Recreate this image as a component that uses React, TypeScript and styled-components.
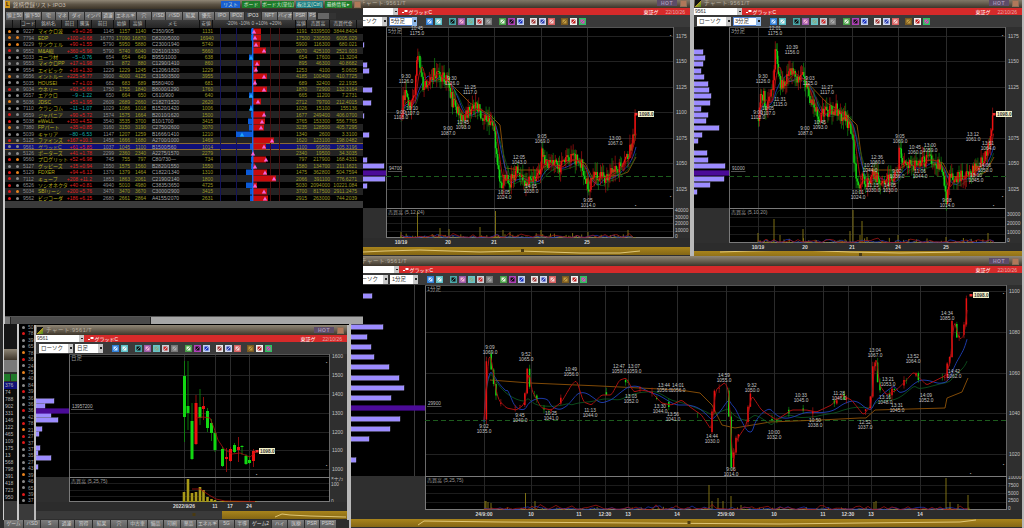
import React from "react";
import styled, { createGlobalStyle } from "styled-components";

const Global = createGlobalStyle`
  html, body { margin: 0; padding: 0; background: #000; overflow: hidden; }
`;

const FONT = `"Liberation Sans", "Noto Sans CJK JP", sans-serif`;

const Desktop = styled.div`
  position: relative;
  width: 1024px;
  height: 528px;
  overflow: hidden;
  background: #000;
  font-family: ${FONT};
  font-size: 5px;
  color: #aaa;
`;

/* ---------- random + chart maths ---------- */
type P = [number, number];

function rng(seed: number) {
  let s = seed;
  return () => {
    s = (s * 16807) % 2147483647;
    return (s % 10000) / 10000;
  };
}

function interp(a: P[], x: number) {
  for (let i = 1; i < a.length; i++) {
    if (x <= a[i][0]) {
      const [x0, y0] = a[i - 1];
      const [x1, y1] = a[i];
      return y0 + ((y1 - y0) * (x - x0)) / Math.max(x1 - x0, 0.001);
    }
  }
  return a[a.length - 1][1];
}

function candles(a: P[], seed: number, step: number, noise: number, density: number) {
  const r = rng(seed);
  let up = "", dn = "", upW = "", dnW = "";
  let prev = a[0][1];
  const end = a[a.length - 1][0];
  for (let x = a[0][0]; x <= end; x += step) {
    const base = interp(a, x);
    const close = base + (r() - 0.5) * noise;
    const hi = Math.min(prev, close) - r() * noise * 0.8;
    const lo = Math.max(prev, close) + r() * noise * 0.8;
    if (r() < density || Math.abs(close - prev) > noise * 1.6) {
      const isUp = close < prev;
      const b = `M${x.toFixed(1)} ${prev.toFixed(1)}V${close.toFixed(1)}`;
      const w = `M${x.toFixed(1)} ${hi.toFixed(1)}V${lo.toFixed(1)}`;
      if (isUp) { up += b; upW += w; } else { dn += b; dnW += w; }
    }
    prev = close;
  }
  return { up, dn, upW, dnW };
}

function ma(a: P[], n: number, lift = 0) {
  const end = a[a.length - 1][0];
  const xs: number[] = [];
  const ys: number[] = [];
  for (let x = a[0][0]; x <= end; x += 1) { xs.push(x); ys.push(interp(a, x)); }
  let d = "";
  xs.forEach((x, i) => {
    const from = Math.max(0, i - n);
    let t = 0;
    for (let k = from; k <= i; k++) t += ys[k];
    const v = t / (i - from + 1) + lift;
    d += `${i ? "L" : "M"}${x} ${v.toFixed(1)}`;
  });
  return d;
}

const line = (p: P[]) => p.map((q, i) => `${i ? "L" : "M"}${q[0]} ${q[1]}`).join("");

function volumes(x0: number, x1: number, base: number, seed: number, small: number, spikes: P[]) {
  const r = rng(seed);
  let d = "";
  for (let x = x0; x < x1; x += 1.3) {
    if (r() < 0.62) d += `M${x.toFixed(1)} ${base}v${(-r() * r() * small - 0.5).toFixed(1)}`;
  }
  spikes.forEach(([x, h]) => { d += `M${x} ${base}v${-h}`; });
  return d;
}

function volMa(x0: number, x1: number, base: number, seed: number, amp: number) {
  const r = rng(seed);
  const p: P[] = [];
  for (let x = x0; x <= x1; x += 4) p.push([x, +(base - 0.4 - r() * r() * amp).toFixed(1)]);
  return line(p);
}

/* ---------- chart config ---------- */
type Tag = [number, number, string, string];
type Chart = {
  id: string; x: number; y: number; w: number; h: number; z: number;
  plotL: number; plotR: number; volT: number; volB: number; timeB: number;
  input: string; sel2: string; tools: number; dateRed?: boolean;
  span: string; span_x: number;
  profile: P[]; purpleY: number; holdLabel: string;
  ticks: [string, number][]; vticks: [string, number][];
  days: number[]; timeLabels: [string, number][];
  dashY: number; volLabel: string;
  anchors?: P[]; noise: number; step: number; density: number; seed: number;
  orange: P[]; maN: [number, number, number];
  tags: Tag[];
  last: P; lastLabel: string;
  spikes: P[]; volSmall: number; volStart: number;
  stripFrom: number; stripLine: P[]; stripDark?: number;
  extraVLine?: number;
  daily?: { x: number; t: number; b: number; h: number; l: number; red: boolean }[];
  dailyMa?: P[];
};

const midSeries: P[] = [
  [401,118],[403,100],[406,95],[409,108],[412,100],[415,92],[417,60],[418,48],[420,70],[423,85],[428,80],[432,75],[437,72],[440,80],[445,78],[449,85],[452,100],[457,108],[462,118],[466,112],[472,110],[478,108],[482,115],[488,118],[492,125],[495,135],[497,165],[500,185],[504,178],[510,182],[516,172],[522,180],[528,182],[534,178],[540,176],[542,150],[545,165],[552,165],[560,168],[566,160],[575,160],[582,165],[586,178],[589,198],[592,178],[600,178],[608,176],[614,172],[620,165],[626,160],[630,150],[634,130],[636,114],
];
const rightSeries: P[] = midSeries.map(([x, y]) => [x + 357.5, y]);
const bottomSeries: P[] = [
  [484,420],[486,360],[490,355],[492,378],[497,400],[505,408],[515,410],[522,405],[525,395],[527,365],[530,390],[540,408],[550,410],[560,402],[570,385],[575,380],[582,402],[590,405],[600,395],[610,395],[618,380],[625,378],[632,392],[640,390],[650,392],[660,403],[670,405],[680,400],[690,408],[700,415],[710,430],[714,390],[724,382],[728,395],[731,470],[735,440],[745,425],[750,395],[760,410],[775,420],[790,410],[805,410],[815,412],[830,405],[840,395],[850,400],[862,415],[870,405],[874,350],[878,385],[885,395],[895,390],[905,380],[912,372],[925,385],[935,380],[945,375],[950,355],[952,318],[958,340],[963,335],[967,295],
];

const priceTicks: [string, number][] = [["1175",36],["1150",61],["1125",87],["1100",112],["1075",138],["1050",163],["1025",189]];

const charts: Chart[] = [
  {
    id: "bottom", x: 349, y: 256, w: 675, h: 274, z: 1,
    plotL: 425, plotR: 1007, volT: 476, volB: 510, timeB: 519,
    input: "9561", sel2: "1分足", tools: 0, span: "1分足", span_x: 427,
    profile: [[296,372],[327,383],[337,367],[347,371],[357,374],[367,389],[378,399],[388,404],[398,391],[419,400],[429,390],[439,369],[460,356]],
    purpleY: 408, holdLabel: "29900",
    ticks: [["1100",291],["1080",332],["1060",373],["1040",413],["1020",454]],
    vticks: [["10000",478],["7500",486],["5000",494],["2500",501],["0",509]],
    days: [484,531,579,605,628,677,726,774,823,848,871,920],
    timeLabels: [["24/9:00",484],["10",531],["11",579],["12:30",605],["13",628],["14",677],["25/9:00",726],["10",774],["11",823],["12:30",848],["13",871],["14",920]],
    dashY: 420, volLabel: "売買高 (5,25,75)",
    anchors: bottomSeries, noise: 6, step: 2.4, density: 0.28, seed: 77,
    orange: [[490,380],[530,383],[600,386],[680,390],[700,393],[712,405],[722,425],[735,428],[770,422],[820,420],[860,418],[866,418],[875,410],[945,408],[947,398],[962,392],[968,378]],
    maN: [3, 22, 42],
    tags: [
      [490,347,"9:09","1069.0"],[526,354,"9:52","1065.0"],[571,369,"10:49","1056.0"],[619,366,"12:47","1059.0"],[634,366,"13:07","1059.0"],[631,396,"13:03","1052.0"],[664,385,"13:44","1056.0"],[678,385,"14:01","1056.0"],[724,375,"14:59","1055.0"],[752,385,"9:32","1050.0"],[801,395,"10:33","1045.0"],[839,393,"11:28","1046.0"],[875,350,"13:04","1067.0"],[888,379,"13:21","1053.0"],[913,356,"13:52","1064.0"],[947,313,"14:34","1085.0"],[954,371,"14:42","1062.0"],[926,395,"14:09","1052.0"],[885,397,"13:16","1048.0"],[712,436,"14:44","1030.0"],[731,469,"9:06","1014.0"],[774,432,"10:00","1032.0"],[815,420,"10:50","1038.0"],[865,422,"12:52","1037.0"],[897,405,"13:31","1045.0"],[484,426,"9:02","1035.0"],[520,415,"9:45","1040.0"],[551,413,"10:25","1041.0"],[590,410,"11:13","1044.0"],[660,406,"13:30","1044.0"],[673,414,"13:56","1041.0"],
    ],
    last: [971,295], lastLabel: "1098.0",
    spikes: [[485,9],[486,9],[488,8],[491,7],[525.5,17],[535,9],[709,25],[712,9],[718,12],[723,9],[731,14],[741,5],[874,8],[876,9],[946,32],[968,15],[950,8],[958,6]],
    volSmall: 3, volStart: 484,
    stripFrom: 352, stripDark: 976, stripLine: [[418,526],[424,522],[500,523],[640,524],[780,525],[860,524],[960,523],[976,521]],
    extraVLine: 414,
  },
  {
    id: "mid", x: 348, y: -2, w: 344, h: 258, z: 2,
    plotL: 386, plotR: 674, volT: 208, volB: 238, timeB: 247,
    input: "9561", sel2: "5分足", tools: 0, span: "5分足", span_x: 388,
    profile: [[45,364],[65,367],[71,369],[90,372],[103,371],[116,364],[122,362],[135,369],[160,367],[166,384],[179,385],[186,367]],
    purpleY: 173, holdLabel: "94700",
    ticks: priceTicks,
    vticks: [["40000",211],["30000",218],["20000",224],["10000",231],["0",237]],
    days: [401,448,494,541,587],
    timeLabels: [["10/19",401],["20",448],["21",494],["24",541],["25",587]],
    dashY: 176, volLabel: "売買高 (5,12,24)",
    anchors: midSeries, noise: 13, step: 1.05, density: 1, seed: 11,
    orange: [[430,82],[445,78],[470,103],[490,115],[500,125],[505,168],[520,170],[540,170],[552,162],[575,160],[585,163],[592,177],[610,176],[620,175],[628,172],[636,157]],
    maN: [6, 12, 16],
    tags: [
      [417,28,"10:45","1175.0"],[406,76,"9:30","1126.0"],[401,112,"9:00","1103.0"],[412,108,"10:10","1107.0"],[452,78,"9:30","1126.0"],[470,87,"11:25","1117.0"],[463,122,"10:45","1093.0"],[448,128,"9:00","1087.0"],[504,192,"10:05","1024.0"],[519,157,"12:05","1043.0"],[531,186,"14:05","1030.0"],[542,136,"9:05","1069.0"],[615,138,"13:00","1067.0"],[588,200,"9:05","1014.0"],
    ],
    last: [636,114], lastLabel: "1098.0",
    spikes: [[401,6],[417.5,27],[440,10],[449,9],[480,11],[495.5,27],[503,8],[510,6],[541,8],[588,6],[628,8]],
    volSmall: 5, volStart: 401,
    stripFrom: 350, stripLine: [[363,253],[385,252],[420,251],[480,253],[520,252],[580,254],[620,254],[640,252]],
  },
  {
    id: "right", x: 692, y: -2, w: 332, h: 258, z: 2,
    plotL: 729, plotR: 1006, volT: 208, volB: 243, timeB: 251,
    input: "9561", sel2: "3分足", tools: 0, span: "3分足", span_x: 731,
    profile: [[52,703],[58,705],[64,703],[71,701],[77,704],[84,708],[90,709],[96,711],[103,710],[109,701],[115,708],[121,706],[128,719],[135,702],[141,698],[153,707],[160,708],[166,725],[179,724],[185,710],[192,697]],
    purpleY: 173, holdLabel: "91000",
    ticks: [["1175",36],["1150",61],["1125",87],["1075",138],["1050",163],["1025",189]],
    vticks: [["30000",215],["20000",224],["10000",233],["0",241]],
    days: [758,805,852,898,946],
    timeLabels: [["10/19",758],["20",805],["21",852],["24",898],["25",946]],
    dashY: 176, volLabel: "売買高 (5,10,20)",
    anchors: rightSeries, noise: 13, step: 1.05, density: 1, seed: 29,
    orange: [[787,82],[803,78],[827,103],[847,115],[857,125],[863,168],[878,170],[898,170],[910,162],[933,160],[943,163],[950,177],[968,176],[978,175],[986,172],[994,157]],
    maN: [6, 12, 16],
    tags: [
      [775,28,"12:01","1175.0"],[792,47,"10:39","1156.0"],[763,76,"9:30","1126.0"],[810,78,"9:03","1125.0"],[827,87,"11:27","1117.0"],[780,99,"11:31","1115.0"],[768,108,"10:05","1107.0"],[758,112,"9:00","1103.0"],[820,122,"10:45","1093.0"],[805,128,"9:00","1087.0"],[877,157,"12:36","1060.0"],[870,165,"10:27","1044.0"],[873,185,"11:15","1030.0"],[890,185,"14:05","1030.0"],[858,192,"10:01","1024.0"],[900,136,"9:05","1069.0"],[915,147,"10:45","1060.0"],[930,145,"13:00","1059.0"],[920,171,"11:06","1044.0"],[897,171,"9:02","1036.0"],[947,200,"9:08","1014.0"],[973,134,"13:12","1061.0"],[988,143,"13:51","1064.0"],[985,165,"14:06","1050.0"],[976,175,"13:10","1045.0"],
    ],
    last: [994,114], lastLabel: "1098.0",
    spikes: [[758,10],[774,24],[780,8],[803,14],[850,12],[853,33],[860,8],[862,22],[867,6],[898,8],[946,6],[988,10]],
    volSmall: 5, volStart: 758,
    stripFrom: 694, stripLine: [[720,253],[750,252],[800,251],[850,253],[900,254],[960,253]],
  },
  {
    id: "daily", x: 34, y: 325, w: 315, h: 195, z: 6,
    plotL: 69, plotR: 330, volT: 477, volB: 502, timeB: 511,
    input: "9561", sel2: "日足", tools: 1, span: "日足", span_x: 71,
    profile: [[401,54],[406,45],[415,51],[420,58],[429,42],[434,39],[448,40],[453,38],[458,51],[467,38]],
    purpleY: 411, holdLabel: "13957200",
    ticks: [["1600",356],["1500",375],["1400",394],["1300",413],["1200",432],["1100",450],["1000",469]],
    vticks: [["×十万",479],["100",485],["0",502]],
    days: [184,215,230,249],
    timeLabels: [["2022/9/26",184],["11",215],["17",230],["24",249]],
    dashY: 0, volLabel: "売買高 (5,25,75)",
    noise: 0, step: 1, density: 1, seed: 5,
    orange: [], maN: [5, 5, 5],
    tags: [],
    last: [257,451], lastLabel: "1098.0",
    spikes: [[184,10],[188,23],[192,9],[196,10],[200,15],[203.5,12],[207.5,5],[211.5,3],[215,2],[223,1],[227,1],[231,1],[234,1],[238,1]],
    volSmall: 0, volStart: 184,
    stripFrom: 222, stripDark: 346, stripLine: [[275,518],[282,515],[290,516],[310,517],[346,518]],
    daily: [
      { x: 184.5, t: 376, b: 417, h: 361, l: 442, red: false },
      { x: 188, t: 406, b: 413, h: 361, l: 430, red: false },
      { x: 192, t: 421, b: 459, h: 403, l: 460, red: false },
      { x: 196, t: 403, b: 444, h: 395, l: 445, red: true },
      { x: 200, t: 407, b: 418, h: 389, l: 425, red: false },
      { x: 203.5, t: 406, b: 409, h: 397, l: 420, red: true },
      { x: 207.5, t: 411, b: 428, h: 408, l: 432, red: false },
      { x: 211.5, t: 423, b: 433, h: 419, l: 441, red: false },
      { x: 215, t: 433, b: 450, h: 431, l: 452, red: false },
      { x: 222.5, t: 449, b: 466, h: 447, l: 467, red: false },
      { x: 226.5, t: 457, b: 459, h: 448, l: 472, red: true },
      { x: 230.5, t: 449, b: 461, h: 447, l: 462, red: true },
      { x: 234.5, t: 445, b: 452, h: 443, l: 453, red: false },
      { x: 238.5, t: 447, b: 450, h: 437, l: 462, red: true },
      { x: 242, t: 446, b: 447, h: 445, l: 455, red: false },
      { x: 246, t: 456, b: 464, h: 454, l: 465, red: false },
      { x: 249.5, t: 460, b: 463, h: 456, l: 464, red: false },
      { x: 253.5, t: 451, b: 461, h: 449, l: 467, red: true },
    ],
    dailyMa: [[196,418],[203,417],[210,418],[214,428],[218,440],[224,449],[232,454],[240,453],[250,457],[256,452]],
  },
];

/* ---------- window chrome ---------- */
const Win = styled.section<{ $x: number; $y: number; $w: number; $h: number; $z: number }>`
  position: absolute;
  left: ${(p) => p.$x}px;
  top: ${(p) => p.$y}px;
  width: ${(p) => p.$w}px;
  height: ${(p) => p.$h}px;
  z-index: ${(p) => p.$z};
  box-sizing: border-box;
  display: flex;
  flex-direction: column;
  background: #2e2e2e;
  border-left: 2px solid #b9b9b9;
  border-right: 2px solid #b9b9b9;
  overflow: hidden;
`;
const TitleBar = styled.header`
  flex: 0 0 10px;
  display: flex;
  align-items: center;
  gap: 3px;
  padding: 0 3px 0 1px;
  background: linear-gradient(#8f8676, #6d6455 45%, #3d352a);
  color: #b5ada0;
  font-size: 5.5px;
  letter-spacing: 0.5px;
`;
const Logo = styled.i`
  width: 6px;
  height: 7px;
  background: linear-gradient(135deg, #111 50%, #b9a020 50%, #3c8a20);
`;
const Spacer = styled.span`
  flex: 1;
`;
const HotBadge = styled.span`
  width: 20px;
  height: 6px;
  line-height: 6px;
  text-align: center;
  color: #a696b4;
  background: #5d4c68;
  font-size: 5px;
  font-weight: bold;
`;
const CloseBtn = styled.span`
  width: 5px;
  height: 5px;
  background: #b0785a;
  border: 1px solid #8d7058;
`;
const RedBar = styled.div`
  flex: 0 0 7px;
  display: flex;
  align-items: center;
  background: #d62a2a;
  color: #fff;
  font-size: 5px;
  padding-right: 5px;
`;
const CodeInput = styled.div`
  width: 48px;
  height: 7px;
  line-height: 7px;
  background: #fff;
  color: #333;
  padding-left: 1px;
  box-sizing: border-box;
  position: relative;
  margin-right: 4px;
`;
const Arrow = styled.b<{ $blue?: boolean }>`
  position: absolute;
  right: 0;
  top: 0;
  bottom: 0;
  width: 5px;
  background: ${(p) => (p.$blue ? "#8fb8e8" : "#c8c8c8")};
  &::after {
    content: "";
    position: absolute;
    left: 1.5px;
    top: 40%;
    width: 2px;
    height: 1.5px;
    background: #222;
  }
`;
const Name = styled.span`
  display: flex;
  align-items: center;
  gap: 2px;
  &::before {
    content: "";
    width: 1.5px;
    height: 1.5px;
    margin-top: 2px;
    background: #fff;
    box-shadow: 3px -1.5px 0 0.5px #fff;
    margin-right: 3px;
  }
`;
const DateText = styled.span`
  color: #e9a9a9;
  margin-left: 7px;
`;
const ToolBar = styled.div`
  flex: 0 0 12px;
  display: flex;
  align-items: center;
  background: #3a3a3a;
  padding-left: 3px;
  box-sizing: border-box;
`;
const Select = styled.div<{ $w: number; $blue?: boolean }>`
  position: relative;
  box-sizing: border-box;
  width: ${(p) => p.$w}px;
  height: 9px;
  line-height: 9px;
  margin-right: 2px;
  padding-left: 2px;
  background: #fff;
  color: #333;
  font-size: 5.5px;
  ${(p) => (p.$blue ? "outline: 1px solid #5a8ad8; outline-offset: -1px;" : "")}
`;
const ToolGroup = styled.div<{ $ml: number }>`
  display: flex;
  gap: 2px;
  margin-left: ${(p) => p.$ml}px;
`;
const ToolIcon = styled.svg`
  display: block;
  width: 7px;
  height: 7px;
`;

/* ---------- chart panes ---------- */
const Grid = styled.div<{ $cols: string; $rows: string }>`
  flex: none;
  display: grid;
  grid-template-columns: ${(p) => p.$cols};
  grid-template-rows: ${(p) => p.$rows};
`;
const Pane = styled.div<{ $black?: boolean }>`
  background: ${(p) => (p.$black ? "#000" : "#2f2f2f")};
  overflow: hidden;
  min-width: 0;
`;
const MainPlot = styled.div`
  position: relative;
  z-index: 1;
  background: #000;
  min-width: 0;
  overflow: visible;
`;
const TimeRow = styled.div`
  grid-column: 1 / -1;
  background: #2c2c2c;
  overflow: hidden;
`;
const Drawing = styled.svg`
  display: block;
  font-family: ${FONT};
  font-size: 5px;
  overflow: visible;
`;
const Strip = styled.div`
  flex: none;
  height: 8px;
  background: linear-gradient(#a8841c, #846614);
  overflow: hidden;
`;

const TOOL_COLORS: string[][] = [
  ["#2f7fd8", "#cfe6ff"], ["#5bc0c8", "#f2f2f2"],
  ["#49a7a8", "#111"], ["#9a5aa8", "#f4b0d0"], ["#66c4c8", "#8a8"], ["#c8d0d8", "#d02a2a"], ["#777", "#aaa"],
  ["#48a048", "#e8f0e0"], ["#b040b8", "#111"], ["#c0d0f0", "#1a30c0"],
  ["#e8e8e8", "#a03838"], ["#d0d8f0", "#3040b0"], ["#d86060", "#f0d0d0"],
  ["#7a5a20", "#c09a40"], ["#f0f0f0", "#c02020"], ["#30c060", "#e040c0"],
];

function Tool({ c }: { c: string[] }) {
  return (
    <ToolIcon viewBox="0 0 7 7">
      <rect width="7" height="7" fill={c[0]} />
      <rect x="1.5" y="1.5" width="4" height="4" fill={c[1]} />
      <path d="M1 6L6 1" stroke={c[0]} strokeWidth="0.8" />
    </ToolIcon>
  );
}

function Toolbar({ c }: { c: Chart }) {
  const groups: [number, number, number][] = [[0, 2, 7], [2, 7, 7], [7, 10, 7], [10, 13, 6], [13, 16, 6]];
  return (
    <ToolBar>
      <Select $w={34}>ローソク<Arrow /></Select>
      <Select $w={28} $blue={c.id !== "daily" && c.id !== "bottom"}>
        {c.sel2}<Arrow $blue={c.id !== "daily" && c.id !== "bottom"} />
      </Select>
      {groups.map(([a, b, ml], i) => (
        <ToolGroup key={i} $ml={ml}>
          {TOOL_COLORS.slice(a, b).map((col, k) => <Tool key={k} c={col} />)}
        </ToolGroup>
      ))}
    </ToolBar>
  );
}

function ChartView({ c }: { c: Chart }) {
  const left = c.x + 2;
  const right = c.x + c.w - 2;
  const top = c.y + 29;
  const profW = c.plotL - left;
  const plotW = c.plotR - c.plotL;
  const axisW = right - c.plotR;
  const mainH = c.volT - top;
  const volH = c.volB - c.volT;
  const timeH = c.timeB - c.volB;
  const cs = c.anchors ? candles(c.anchors, c.seed, c.step, c.noise, c.density) : null;
  const volD = volumes(c.volStart, c.last[0], c.volB, c.seed + 3, c.volSmall, c.spikes);
  return (
    <Win $x={c.x} $y={c.y} $w={c.w} $h={c.h} $z={c.z}>
      <TitleBar>
        <Logo />
        <span>チャート:9561/T</span>
        <Spacer />
        <HotBadge>HOT</HotBadge>
        <CloseBtn />
      </TitleBar>
      <RedBar>
        <CodeInput>{c.input}<Arrow /></CodeInput>
        <Name>グラッドC</Name>
        <Spacer />
        <span>東証グ</span>
        <DateText>22/10/26</DateText>
      </RedBar>
      <Toolbar c={c} />
      <Grid
        $cols={`${profW}px ${plotW}px ${axisW}px`}
        $rows={`${mainH}px ${volH}px ${timeH}px`}
      >
        <Pane $black>
          <Drawing width={profW} height={mainH} viewBox={`${left} ${top} ${profW} ${mainH}`}>
            {c.extraVLine && <path d={`M${c.extraVLine + 0.5} ${top}V${c.volT}`} stroke="#3a3a3a" />}
            {c.profile.map(([y, e], i) => (
              <rect key={i} x={left} y={y - 2.2} width={e - left} height={4.4} fill="#9c8cff" stroke="#c4baff" strokeWidth="0.3" />
            ))}
            <rect x={left} y={c.purpleY - 2.6} width={profW} height={5.2} fill="#4b0b98" />
          </Drawing>
        </Pane>
        <MainPlot>
          <Drawing width={plotW} height={mainH} viewBox={`${c.plotL} ${top} ${plotW} ${mainH}`}>
            {c.ticks.map(([, y], i) => (
              <path key={i} d={`M${c.plotL} ${y + 0.5}H${c.plotR}`} stroke="#222" strokeWidth="1" />
            ))}
            {c.days.map((x, i) => (
              <path key={i} d={`M${x + 0.5} ${top}V${c.volT}`} stroke="#2b2b2b" strokeWidth="1" />
            ))}
            <path d={`M${c.plotL + 0.5} ${top}V${c.volT}`} stroke="#6a6a6a" />
            <path d={`M${c.plotL} ${top + 0.5}H${c.plotR}`} stroke="#555" />
            <path d={`M${c.plotR - 0.5} ${top}V${c.volT}`} stroke="#666" />
            {c.dashY > 0 && (
              <path d={`M${c.plotL} ${c.dashY + 0.5}H${c.plotR}`} stroke="#1d5c1d" strokeDasharray="5 3" />
            )}
            <text x={c.span_x} y={top + 6} fill="#999" fontSize="5.5">{c.span}</text>
            <text x={c.plotL + 3} y={c.purpleY - 3} fill="#bbb" fontSize="4.6">{c.holdLabel}</text>
            <path d={`M${c.plotL + 2} ${c.purpleY - 1.5}H${c.plotL + 3 + c.holdLabel.length * 2.7}`} stroke="#888" strokeWidth="0.6" />

            {cs && (
              <>
                <path d={line(c.orange)} stroke="#8f5208" strokeWidth="0.9" fill="none" />
                <path d={ma(c.anchors as P[], c.maN[2], 4)} stroke="#0e5c22" strokeWidth="0.8" fill="none" />
                <path d={ma(c.anchors as P[], c.maN[1], 2)} stroke="#1f3fb8" strokeWidth="0.9" fill="none" />
                <path d={cs.upW} stroke="#c81414" strokeWidth="0.6" fill="none" />
                <path d={cs.dnW} stroke="#12a012" strokeWidth="0.6" fill="none" />
                <path d={cs.dn} stroke="#14d814" strokeWidth="1.5" fill="none" />
                <path d={cs.up} stroke="#ec1010" strokeWidth="1.5" fill="none" />
                <path d={ma(c.anchors as P[], c.maN[0])} stroke="#a81010" strokeWidth="1" fill="none" />
              </>
            )}
            {c.daily && (
              <>
                {c.daily.map((d, i) => (
                  <g key={i}>
                    <path d={`M${d.x} ${d.h}V${d.l}`} stroke={d.red ? "#b01010" : "#0a900a"} strokeWidth="0.8" />
                    <rect x={d.x - 1.5} y={d.t} width={3} height={d.b - d.t} fill={d.red ? "#ee1010" : "#12d812"} />
                  </g>
                ))}
                <path d={line(c.dailyMa as P[])} stroke="#a81212" strokeWidth="0.8" fill="none" />
              </>
            )}
            {c.tags.map(([x, y, a, b], i) => (
              <g key={i} textAnchor="middle" fill="#c6c6c6" fontSize="4.8">
                <text x={x} y={y + 2}>{a}</text>
                <text x={x} y={y + 7}>{b}</text>
              </g>
            ))}
            <rect x={c.last[0] - 1.5} y={c.last[1] - 1} width={3} height={2.5} fill="#f03030" />
            <rect x={c.last[0] + 2} y={c.last[1] - 3} width={16} height={6} fill="#f2efc6" />
            <text x={c.last[0] + 3} y={c.last[1] + 1.6} fill="#333" fontSize="4.8" fontWeight="bold">{c.lastLabel}</text>
            <text x={c.plotR - 4} y={top + 10} fill="#aaa" fontSize="4">▪</text>
            <text x={c.plotR - 4} y={c.volT - 10} fill="#aaa" fontSize="4">▪</text>
            <text x={c.last[0] - 1} y={c.volT - 1} fill="#aaa" fontSize="4">▪</text>
          </Drawing>
        </MainPlot>
        <Pane>
          <Drawing width={axisW} height={mainH} viewBox={`${c.plotR} ${top} ${axisW} ${mainH}`}>
            {c.ticks.map(([t, y], i) => (
              <text key={i} x={c.plotR + 2} y={y + 2} fill="#c2c2c2" fontSize="5">{t}</text>
            ))}
          </Drawing>
        </Pane>
        <Pane />
        <Pane $black>
          <Drawing width={plotW} height={volH} viewBox={`${c.plotL} ${c.volT} ${plotW} ${volH}`}>
            {[0.25, 0.5, 0.75].map((k, i) => (
              <path key={i} d={`M${c.plotL} ${Math.round(c.volT + volH * k) + 0.5}H${c.plotR}`} stroke="#1c1c1c" />
            ))}
            {c.days.map((x, i) => (
              <path key={i} d={`M${x + 0.5} ${c.volT}V${c.volB}`} stroke="#262626" />
            ))}
            <rect x={c.plotL + 0.5} y={c.volT + 0.5} width={plotW - 1} height={volH - 1} fill="none" stroke="#7a7a7a" />
            <path d={volD} stroke={c.daily ? "#a89a18" : "#8a7c14"} strokeWidth={c.daily ? 2.6 : 0.9} fill="none" />
            {!c.daily && (
              <>
                <path d={volMa(c.volStart, c.last[0], c.volB, c.seed + 5, 4)} stroke="#2038c0" strokeWidth="0.7" fill="none" />
                <path d={volMa(c.volStart, c.last[0], c.volB, c.seed + 9, 6)} stroke="#b01818" strokeWidth="0.7" fill="none" />
              </>
            )}
            {c.daily && (
              <path d={line([[192,489],[200,489],[209,495],[216,499],[225,501],[255,501.5]])} stroke="#a81212" strokeWidth="0.8" fill="none" />
            )}
            <text x={c.plotL + 2} y={c.volT + 6} fill="#999" fontSize="5">{c.volLabel}</text>
          </Drawing>
        </Pane>
        <Pane>
          <Drawing width={axisW} height={volH} viewBox={`${c.plotR} ${c.volT} ${axisW} ${volH}`}>
            {c.vticks.map(([t, y], i) => (
              <text key={i} x={c.plotR + 1} y={y + 1} fill="#c2c2c2" fontSize="4.8">{t}</text>
            ))}
          </Drawing>
        </Pane>
        <TimeRow>
          <Drawing width={c.w} height={timeH} viewBox={`${left} ${c.volB} ${c.w} ${timeH}`}>
            {c.timeLabels.map(([t, x], i) => (
              <text key={i} x={x} y={c.volB + 6} textAnchor="middle" fill="#d8d8d8" fontSize="5" fontWeight="bold">{t}</text>
            ))}
          </Drawing>
        </TimeRow>
      </Grid>
      <Strip>
        <Drawing width={c.w} height={8} viewBox={`${left} ${c.timeB + 1} ${c.w} 8`}>
          {c.stripDark && c.id === "daily" && (
            <rect x={left} y={c.timeB} width={c.stripFrom - left} height={10} fill="#3a3a3a" />
          )}
          <path d={line(c.stripLine)} stroke="#e8cf80" strokeWidth="0.9" fill="none" />
          <rect x={(left + c.x + c.w) / 2} y={c.timeB + 3} width={3} height={3} fill="#4a3a10" />
        </Drawing>
      </Strip>
    </Win>
  );
}

/* ---------- list window ---------- */
const ListWin = styled.section`
  position: absolute;
  left: 0;
  top: 0;
  width: 363px;
  height: 324px;
  z-index: 4;
  display: flex;
  box-sizing: border-box;
  background: #000;
`;
const LeftEdge = styled.div`
  flex: 0 0 5px;
  box-sizing: border-box;
  background: #2b2b2b;
  border-right: 2px solid #c8c8c8;
`;
const ListBody = styled.div`
  flex: 1;
  min-width: 0;
  display: flex;
  flex-direction: column;
`;
const ListTitle = styled.header`
  flex: 0 0 9px;
  display: flex;
  align-items: center;
  gap: 2px;
  padding-right: 2px;
  background: linear-gradient(#8f8676, #5c5345 50%, #3b3327);
  color: #c6bfb2;
  font-size: 5.5px;
`;
const ListLogo = styled.i`
  width: 5px;
  height: 7px;
  background: #d69a1c;
  color: #111;
  font-style: normal;
  line-height: 7px;
  text-align: center;
  font-size: 5px;
  font-weight: bold;
  margin-right: 1px;
`;
const TitleBtn = styled.span<{ $w: number; $bg: string }>`
  width: ${(p) => p.$w}px;
  height: 7px;
  line-height: 7px;
  text-align: center;
  background: ${(p) => p.$bg};
  color: #d8e8d8;
  font-size: 4.8px;
`;
const Tabs = styled.nav`
  flex: 0 0 11px;
  display: flex;
  align-items: flex-end;
  gap: 1px;
  padding-left: 1px;
  background: #2c2c2c;
  overflow: hidden;
`;
const Tab = styled.span<{ $w: number; $on?: boolean }>`
  flex: 0 0 ${(p) => p.$w}px;
  height: 8px;
  line-height: 8px;
  text-align: center;
  background: ${(p) => (p.$on ? "#3a3a3a" : "linear-gradient(#7d7d7d, #5c5c5c)")};
  color: ${(p) => (p.$on ? "#e0e0e0" : "#cfcfcf")};
  font-size: 4.8px;
  white-space: nowrap;
`;
const TabScroll = styled.span`
  flex: 0 0 18px;
  height: 6px;
  margin: 0 0 1px 1px;
  background: linear-gradient(90deg, #666 60%, #333 60%);
`;

const COLS = "8px 8px 15px 26px 16px 14px 22px 16px 16px 54px 13px 83px 11px 23px 27px";
const HeadRow = styled.div`
  flex: 0 0 8px;
  display: grid;
  grid-template-columns: ${COLS};
  background: linear-gradient(#3c3c3c, #242424);
  color: #bbb;
  line-height: 8px;
  font-size: 4.8px;
`;
const HeadCell = styled.span`
  text-align: center;
  white-space: nowrap;
  border-right: 1px solid #111;
  overflow: hidden;
`;
const Rows = styled.div`
  flex: none;
  display: grid;
  grid-auto-rows: 6.42px;
`;
const Row = styled.div<{ $alt: boolean; $sel: boolean }>`
  display: grid;
  grid-template-columns: ${COLS};
  align-items: center;
  line-height: 6.42px;
  overflow: hidden;
  background: ${(p) => (p.$sel ? "#0f0f78" : p.$alt ? "#232323" : "#000")};
  ${(p) => (p.$sel ? "box-shadow: inset 0 1px 0 #8a6a34, inset 0 -1px 0 #8a6a34;" : "")}
`;
const Dot = styled.i<{ $c: string }>`
  justify-self: center;
  width: 3px;
  height: 3px;
  border-radius: 50%;
  background: ${(p) => p.$c};
`;
const Cell = styled.span<{ $c: string; $r?: boolean; $pl?: number }>`
  color: ${(p) => p.$c};
  text-align: ${(p) => (p.$r ? "right" : "left")};
  padding-left: ${(p) => p.$pl || 0}px;
  white-space: nowrap;
  overflow: visible;
  font-size: 5px;
`;
const BarSvg = styled.svg`
  display: block;
  width: 83px;
  height: 7px;
`;
const ListFoot = styled.div`
  flex: 0 0 7px;
  background: #3a3a3a;
`;
const ListEmpty = styled.div`
  flex: 1;
  background: #000;
`;
const HScroll = styled.div`
  flex: 0 0 7px;
  display: flex;
  gap: 1px;
  background: #222;
  border-top: 1px solid #555;
`;
const ScrollBtn = styled.span`
  flex: 0 0 5px;
  background: #777;
`;
const ScrollTrack = styled.span`
  flex: 0 0 139px;
  background: #4a4a4a;
`;
const ScrollThumb = styled.span`
  flex: 1;
  background: #a6a6a6;
`;

type RowD = [string, string, string, string, string, string, string, string, string, string, string, string, number, number, number, boolean, string, string];
const O = "#e8821c", R = "#e01818", G = "#8a8a8a";
const rowsData: RowD[] = [
  ["9227","マイクロ波","+9","+0.26","1145","1157","1140","C350/905","1131","1191","3339500","3844.8404",253,263,256,true,O,G],
  ["7794","EDP","+100","+0.68","16770","17090","16870","D8200/5000","16940","17500","230500","6005.029",253,263,257,true,O,O],
  ["9229","サンウェル","+90","+1.55","5790","5950","5880","C2300/1940","5740","5900","116300","680.021",254,262,258,true,O,O],
  ["9552","M&A総","+360","+5.96","5790","5740","6040","D2510/1330","5660","6070","425100","2521.003",255,268,266,true,R,G],
  ["5033","ユーラ材","−5","−0.76","654","654","649","B955/1000","638","654","17600","11.3204",251,255,253,false,G,G],
  ["9553","マイクロPP","+17","+1.98","871","872","880","C1290/1410","860","895","46300","40.8682",255,262,259,true,G,G],
  ["9554","エイピック","+16","+1.30","1229","1229","1245","C1206/1820","1229","1253","4100","5.0605",255,259,258,true,G,G],
  ["9556","イントルー","+225","+5.77","3900","4000","4125","C3150/3500","3955","4185","100400","410.7725",255,269,266,true,O,G],
  ["5035","HOUSEI","+7","+1.03","682","683","689","B580/400","681","689","32400","22.1935",255,258,257,true,G,G],
  ["9034","ウネリー","+93","+5.66","1750","1755","1840","B8000/1290","1760","1870","72900","132.3164",255,269,266,true,R,G],
  ["9557","エアクロ","−9","−1.22","650","664","650","C610/900","640","665","11200","7.2731",251,255,253,false,G,G],
  ["5036","JDSC","+51","+1.95","2609","2689","2660","C1827/1520","2620","2712","79700","212.4015",255,263,260,true,O,G],
  ["7110","クラシコム","−11","−1.07","1029","1086","1018","B1520/1420","1006","1026","15100","155136",252,255,253,false,G,G],
  ["9559","ジャパニア","+90","+5.72","1574","1575","1664","B2010/1620","1500","1677","249400","406.0700",253,267,266,true,R,G],
  ["5038","eWeLL","+150","+4.52","3540","3535","3700","B10/1700","3415","3765","153300","556.7765",250,267,264,true,R,G],
  ["7380","FPパート","+35","+0.85","3160","3150","3190","C2750/2600","3070","3235","128500","405.7295",251,266,263,true,O,G],
  ["5039","キャリア","−80","−6.53","1147","1207","1259","B1666/1410","1210","1340","2600","3.3100",238,255,244,false,G,G],
  ["5125","ファインズ","+167","+10.1","1456","1666","1680","A2700/1000","1469","1620","123100","198.0482",255,276,274,true,R,G],
  ["9561","グラッドC","+61","+5.85","1037","1045","1100","B1500/560","1014","1100","99500","105.3196",252,268,266,true,G,G],
  ["5126","ポーターズ","+41","+1.78","2299","2360","2340","A2275/1570","2279","2340","19500","34.3035",254,256,255,true,G,G],
  ["9560","プログリット","+52","+6.98","745","755","797","C80/730—","734","797","217900","168.4331",253,268,268,true,R,O],
  ["5127","グッピーズ","+15","+0.94","1550","1575","1560","B2820/1550","1550","1580","134700","211.1621",253,257,257,true,G,G],
  ["5129","FDXER","+94","+6.13","1370","1379","1464","C1822/1340","1310","1475","362800","504.7594",248,269,267,true,R,O],
  ["7112","キューブ","+208","+11.2","1853","1863","2061","C2190/2140","1800","2066","391100","776.6271",255,278,276,true,R,G],
  ["6526","ソシオネクタ","+40","+0.81","4940","5010","4980","C3835/3650","4725","5030","2094000","10221.084",248,259,257,true,R,G],
  ["5034","SBIリーシ","+200","+5.76","3470","3470","3670","C3000/2900","3415","3700","817500","2911.2475",252,269,266,true,R,O],
  ["9562","ビジコーダ","+186","+6.15","2680","2661","2864","A4155/2070","2631","2915","263000","744.2039",252,270,267,true,R,G],
];

const tabs: [string, number][] = [["値上50",17],["値下50",17],["宅",13],["マネ",12],["ダイ",15],["インバ",16],["過濾",12],["エネルギ",21],["穴",14],["バSD",13],["バSD",16],["結果",15],["優先",15],["IPO",14],["IPO2",14],["IPO3",16],["NFT",15],["バイオ",13],["PSR",14],["PS",8]];
const heads: string[] = ["","","コード","銘柄名","前日","騰落","前日","始値","高値","メモ","安値","-20%  -10%   0   +10%  +20%","高値","売買高","売買代金"];

function BarCell({ b, r, t, up }: { b: number; r: number; t: number; up: boolean }) {
  const X = (v: number) => v - 215;
  return (
    <BarSvg viewBox="0 0 83 7">
      <path d="M7.5 0V7" stroke="#14145a" />
      <path d="M23.5 0V7" stroke="#14145a" />
      <path d="M57.5 0V7" stroke="#4a1010" />
      <path d="M66.5 0V7" stroke="#4a1010" />
      <rect x={X(b)} y="0.5" width={X(255) - X(b)} height="6" fill="#0a5ad8" />
      <rect x={X(255)} y="0.5" width={X(r) - X(255)} height="6" fill="#c80c0c" />
      <rect x={X(254)} y="0" width="1.4" height="7" fill="#0d6bf0" />
      <path d={`M${X(t)} 1.5L${X(t) + 2.2} 5.6H${X(t) - 2.2}Z`} fill={up ? "#f060d8" : "#20a8f8"} />
    </BarSvg>
  );
}

function ListWindow() {
  return (
    <ListWin>
      <LeftEdge />
      <ListBody>
        <ListTitle>
          <ListLogo>L</ListLogo>
          <span>銘柄登録リスト:IPO3</span>
          <Spacer />
          <TitleBtn $w={19} $bg="#1a5fd0">リスト</TitleBtn>
          <TitleBtn $w={18} $bg="#1e7c2a">ボード中</TitleBtn>
          <TitleBtn $w={32} $bg="#1e7c2a">ボード大(単位)</TitleBtn>
          <TitleBtn $w={27} $bg="#1f7f86">板注文(Ctrl)</TitleBtn>
          <TitleBtn $w={27} $bg="#1e7c2a">最終情報 ▸</TitleBtn>
          <CloseBtn />
        </ListTitle>
        <Tabs>
          {tabs.map(([t, w], i) => <Tab key={i} $w={w} $on={t === "IPO3"}>{t}</Tab>)}
          <TabScroll />
        </Tabs>
        <HeadRow>
          {heads.map((h, i) => <HeadCell key={i}>{h}</HeadCell>)}
        </HeadRow>
        <Rows>
          {rowsData.map((d, i) => {
            const up = d[15];
            const neg = up ? "#e22020" : "#12b0b0";
            const sel = d[0] === "9561";
            const dim = "#8c8c8c";
            const yl = "#9d9a26";
            return (
              <Row key={d[0]} $alt={i % 2 === 1} $sel={sel}>
                <Dot $c={d[16]} />
                <Dot $c={d[17]} />
                <Cell $c={dim} $pl={2}>{d[0]}</Cell>
                <Cell $c={sel ? "#a0a040" : "#b4ac1e"} $pl={2}>{d[1]}</Cell>
                <Cell $c={neg} $r>{d[2]}</Cell>
                <Cell $c={neg} $r>{d[3]}</Cell>
                <Cell $c={dim} $r>{d[4]}</Cell>
                <Cell $c={yl} $r>{d[5]}</Cell>
                <Cell $c={yl} $r>{d[6]}</Cell>
                <Cell $c="#a8a8a8" $pl={6}>{d[7]}</Cell>
                <Cell $c={yl} $r>{d[8]}</Cell>
                <BarCell b={d[12]} r={d[13]} t={d[14]} up={up} />
                <Cell $c={yl} $r>{d[9]}</Cell>
                <Cell $c={yl} $r>{d[10]}</Cell>
                <Cell $c={yl} $r>{d[11]}</Cell>
              </Row>
            );
          })}
        </Rows>
        <ListFoot />
        <ListEmpty />
        <HScroll>
          <ScrollBtn />
          <ScrollTrack />
          <ScrollThumb />
        </HScroll>
      </ListBody>
    </ListWin>
  );
}

/* ---------- windows behind the daily chart ---------- */
const Rail = styled.aside`
  position: absolute;
  left: 0;
  top: 324px;
  width: 34px;
  height: 196px;
  z-index: 5;
  display: flex;
  background: #111;
`;
const RailEdge = styled.div`
  flex: 0 0 4px;
  box-sizing: border-box;
  background: #2a2a2a;
  border-right: 1px solid #cfcfcf;
`;
const RailA = styled.div`
  flex: 0 0 13px;
  display: flex;
  flex-direction: column;
  background: #0b0b0b;
  overflow: hidden;
`;
const RailGap = styled.div`
  flex: 0 0 25px;
  background: #151515;
`;
const RailHead = styled.div`
  flex: 0 0 11px;
  background: linear-gradient(#8f8676, #3d352a);
`;
const RailBand = styled.div`
  flex: 0 0 12px;
  background: #7a7a7a;
`;
const RailGreen = styled.div`
  flex: 0 0 10px;
  padding: 2px 0 0;
  display: flex;
  gap: 1px;
  box-sizing: border-box;
  background: #2c2c2c;
  &::before, &::after {
    content: "";
    width: 6px;
    height: 7px;
    background: #1f7a2a;
  }
`;
const RailNum = styled.div<{ $sel?: boolean }>`
  flex: 0 0 7px;
  line-height: 7px;
  padding-left: 1px;
  color: #b4b4b4;
  background: ${(p) => (p.$sel ? "#0f0f78" : "transparent")};
`;
const RailFoot = styled.div`
  flex: 1;
  background: #3a3a3a;
`;
const RailB = styled.div`
  flex: 0 0 17px;
  box-sizing: border-box;
  display: flex;
  flex-direction: column;
  background: #000;
  border-left: 2px solid #c8c8c8;
  overflow: hidden;
`;
const RailBRow = styled.div`
  flex: 0 0 6.42px;
  display: flex;
  align-items: center;
  gap: 3px;
  padding-left: 3px;
  line-height: 6.42px;
  color: #999;
`;
const RailBFoot = styled.div`
  flex: 1;
  background: #3a3a3a;
`;
const BackTabs = styled.nav`
  position: absolute;
  left: 0;
  top: 520px;
  width: 349px;
  height: 8px;
  z-index: 5;
  display: flex;
  gap: 1px;
  padding-left: 4px;
  box-sizing: border-box;
  background: #2c2c2c;
  overflow: hidden;
`;

const railNums = ["376","74","788","902","331","146","122","465","109","175","13","568","798","391","418","723","950"];
const railB: [string, string][] = [["50",G],["78",R],["39",G],["65",G],["78",O],["36",R],["24",G],["75",O],["40",G],["84",G],["39",R],["36",G],["36",G],["36",R],["42",G],["78",R],["21",O],["27",R],["37",R],["37",G],["35",G],["27",G],["43",G],["39",O],["46",G],["65",G],["39",R],["37",G]];
const backTabs: [string, number][] = [["ゲーム",19],["バSD",16],["S",17],["過濾",15],["習得",17],["結果",17],["穴",16],["中古車",19],["備品",15],["印刷",16],["薬品",15],["エネルギ",21],["5G",15],["半導",14],["ゲーム2",21],["ハイ",15],["医療",16],["PSR",14],["PSR2",16]];

function Behind() {
  return (
    <>
      <Rail>
        <RailEdge />
        <RailA>
          <RailGap />
          <RailHead />
          <RailBand />
          <RailGreen />
          {railNums.map((n, i) => <RailNum key={i} $sel={i === 0}>{n}</RailNum>)}
          <RailFoot />
        </RailA>
        <RailB>
          {railB.map(([n, c], i) => (
            <RailBRow key={i}>
              <Dot $c={c} />
              <span>{n}</span>
            </RailBRow>
          ))}
          <RailBFoot />
        </RailB>
      </Rail>
      <BackTabs>
        {backTabs.map(([t, w], i) => <Tab key={i} $w={w} $on={t === "ゲーム2"}>{t}</Tab>)}
      </BackTabs>
    </>
  );
}

export default function App() {
  return (
    <Desktop>
      <Global />
      {charts.map((c) => <ChartView key={c.id} c={c} />)}
      <ListWindow />
      <Behind />
    </Desktop>
  );
}
